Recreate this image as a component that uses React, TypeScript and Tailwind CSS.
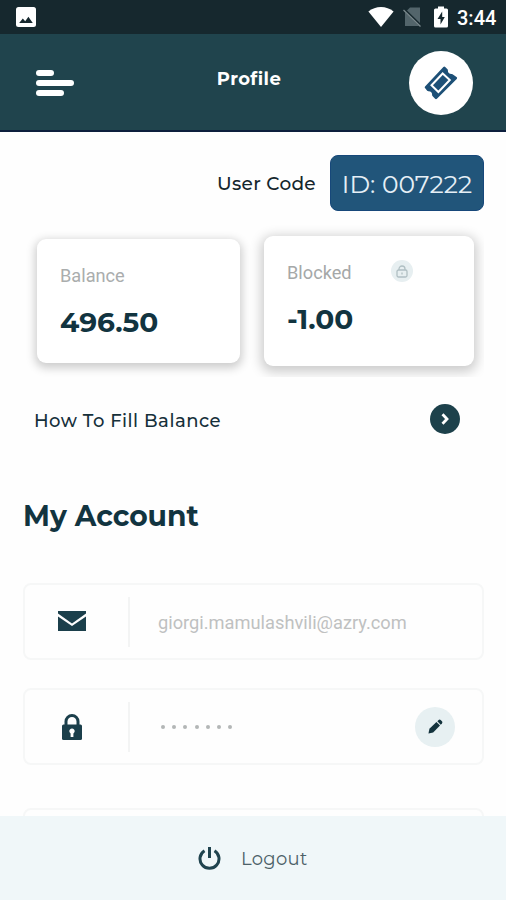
import type { ReactNode } from 'react'

function StatusBar() {
    return (
        <div className="flex h-[34px] shrink-0 items-center bg-[#16282e] pl-4 pr-[11px]">
            <svg width="20" height="20" viewBox="0 0 20 20">
                <rect width="20" height="20" rx="2.5" fill="#fff" />
                <path d="M3.2 16l3.6-4.6 2.4 2.8 3.2-4.4 4.4 6.2z" fill="#16282e" />
            </svg>
            <div className="ml-auto flex items-center">
                <svg width="26" height="20" viewBox="0 0 26 20">
                    <path d="M13 20L0.4 4.4C4 1.6 8.3 0 13 0s9 1.6 12.6 4.4z" fill="#fff" />
                </svg>
                <svg className="ml-[9px]" width="20" height="20" viewBox="0 0 20 20">
                    <path d="M7 0.5h10V19H2V5.5z" fill="#53656b" />
                    <path d="M0.8 2.2l17 16.6" stroke="#16282e" strokeWidth="2.6" />
                    <path d="M0.5 3l17 16.5" stroke="#7b898d" strokeWidth="1.3" />
                </svg>
                <svg className="ml-[10px]" width="16" height="22" viewBox="0 0 16 22">
                    <path d="M5 0.5h6v2h2.5A1.5 1.5 0 0 1 15 4v16a1.5 1.5 0 0 1-1.5 1.500h-11A1.5 1.5 0 0 1 1 20V4a1.500 1.500 0 0 1 1.500-1.500H5z" fill="#fff" />
                    <path d="M9.2 5.500L4.500 13h3v5.500L11.800 11H9.200z" fill="#16282e" />
                </svg>
                <span className="ml-2 mt-0.5 w-[38px] whitespace-nowrap font-[Roboto] text-[20px] font-medium leading-5 text-white">3:44</span>
            </div>
        </div>
    )
}

function Header() {
    return (
        <header className="flex h-[98px] shrink-0 items-center justify-between border-b-2 border-[#0d1f3d] bg-[#20444d] pl-9 pr-[33px]">
            <button className="flex w-[53px] flex-col gap-1 pt-0.5">
                <span className="h-1.5 w-[18px] rounded-full bg-white" />
                <span className="h-1.5 w-[38px] rounded-full bg-white" />
                <span className="h-1.5 w-7 rounded-full bg-white" />
            </button>
            <h1 className="mb-[5px] text-[18px] font-bold tracking-[0.4px] text-white">Profile</h1>
            <button className="mt-0.5 flex size-16 items-center justify-center rounded-full bg-white">
                <svg width="34" height="34" viewBox="0 0 34 34">
                    <path
                        d="M20.3 2L22.6 4.200c-0.300 3 1.700 5.300 5.200 5.200L31.800 12 12 31.800l-2.600-2.600c0.300-3.300-1.800-5.400-5.200-5.200L2 21.300z"
                        fill="#1d5077"
                        stroke="#1d5077"
                        strokeWidth="2.600"
                        strokeLinejoin="round"
                    />
                    <path d="M18.700 7.500L25.800 14 14.400 26 7.500 19.300z" fill="none" stroke="#fff" strokeWidth="2" />
                </svg>
            </button>
        </header>
    )
}

function Field({ icon, children }: { icon: ReactNode; children?: ReactNode }) {
    return (
        <div className="flex h-[77px] shrink-0 items-center rounded-lg border-2 border-[#f6f7f7]">
            <div className="flex w-[94px] justify-center">{icon}</div>
            <div className="ml-[9px] h-[50px] w-0.5 bg-[#f3f4f4]" />
            {children}
        </div>
    )
}

export default function App() {
    return (
        <div className="flex h-[900px] w-[506px] flex-col overflow-hidden bg-[#fefefe] font-[Montserrat,Inter,sans-serif] text-[#123440]">
            <StatusBar />
            <Header />

            <main className="flex min-h-0 flex-1 flex-col overflow-hidden pl-[23px] pr-[22px]">
                <div className="mt-[23px] flex h-14 shrink-0 items-center justify-end">
                    <span className="mr-3.5 mt-0.5 whitespace-nowrap text-[18.5px] font-medium tracking-[0.3px] text-[#14262c]">User Code</span>
                    <div className="flex h-14 w-[154px] items-center justify-center whitespace-nowrap rounded-lg border border-[#17487a] bg-[#21557a] pt-1 text-[25px] font-normal text-[#e6eff6]">
                        <span>ID: 007222</span>
                    </div>
                </div>

                <div className="flex h-[166px] shrink-0 items-start gap-6 overflow-hidden pl-3.5 pt-[25px]">
                    <section className="mt-[3px] h-[124px] w-[203px] rounded-[9px] bg-white pl-[23px] pt-[25px] shadow-[0_3px_10px_2px_rgba(0,0,0,0.2)]">
                        <p className="font-[Roboto] text-[18.2px] leading-6 text-[#aaadad]">Balance</p>
                        <p className="mt-4 text-[28px] font-bold leading-9">496.50</p>
                    </section>
                    <section className="h-[130px] w-[210px] rounded-[9px] bg-white pl-[23px] pt-[25px] shadow-[0_3px_12px_3px_rgba(0,0,0,0.2)]">
                        <div className="flex items-center">
                            <p className="w-[104px] font-[Roboto] text-[18.2px] leading-6 text-[#a5a8a8]">Blocked</p>
                            <span className="-mt-1 flex size-[22px] items-center justify-center rounded-full bg-[#e7eff1]">
                                <svg width="12" height="13" viewBox="0 0 12 13" fill="none" stroke="#b0bfc3" strokeWidth="1.3">
                                    <rect x="1" y="5" width="10" height="7" rx="1.5" />
                                    <path d="M3 5V4a3 3 0 0 1 6 0v1M6 7.5v2" />
                                </svg>
                            </span>
                        </div>
                        <p className="mt-4 text-[28px] font-bold leading-9">-1.00</p>
                    </section>
                </div>

                <div className="mt-[27px] flex h-[30px] shrink-0 items-center justify-between pl-[11px] pr-6">
                    <span className="mt-1 whitespace-nowrap text-[18px] font-medium tracking-[0.5px] text-[#16303a]">How To Fill Balance</span>
                    <span className="flex size-[30px] items-center justify-center rounded-full bg-[#1d414b]">
                        <svg width="8" height="12" viewBox="0 0 8 12" fill="none" stroke="#fff" strokeWidth="2.8">
                            <path d="M1.500 1.300L6 6l-4.500 4.700" />
                        </svg>
                    </span>
                </div>

                <h2 className="mt-16 text-[28.2px] font-bold leading-9">My Account</h2>

                <div className="mt-[49px] flex flex-col gap-7">
                    <Field
                        icon={
                            <svg className="mb-px" width="28" height="20" viewBox="0 0 28 20" fill="#1b3f4b">
                                <path d="M0 0h28v2.500L14 12.500 0 2.500z" />
                                <path d="M0 5.500l14 9.500 14-9.500V20H0z" />
                            </svg>
                        }
                    >
                        <span className="ml-7 mt-0.5 font-[Roboto] text-[18.25px] text-[#bfc1c1]">giorgi.mamulashvili@azry.com</span>
                    </Field>
                    <Field
                        icon={
                            <svg width="20" height="26" viewBox="0 0 20 26">
                                <path d="M4 12V7.500a6 6 0 0 1 12 0V12" fill="none" stroke="#1b3f4b" strokeWidth="3" />
                                <rect y="10.500" width="20" height="15.500" rx="1.500" fill="#1b3f4b" />
                                <path d="M8.600 19.500a2.700 2.700 0 1 1 2.800 0V23H8.600z" fill="#fff" />
                            </svg>
                        }
                    >
                        <div className="ml-[31px] flex gap-[7.2px]">
                            {[0, 1, 2, 3, 4, 5, 6].map((i) => (
                                <span key={i} className="size-1 rounded-full bg-[#b3b6b6]" />
                            ))}
                        </div>
                        <button className="ml-auto mr-[27px] flex size-10 items-center justify-center rounded-full bg-[#e7f0f2]">
                            <svg width="15" height="15" viewBox="0 0 16 16" fill="#14333d">
                                <path d="M0.500 15.500l1-5 7.500-7.300 3.800 3.800-7.300 7.500z" />
                                <path d="M10 2.400l1.300-1.300a1.600 1.600 0 0 1 2.200 0l1.400 1.400a1.600 1.600 0 0 1 0 2.200l-1.300 1.300z" />
                            </svg>
                        </button>
                    </Field>
                </div>
                <div className="mt-[43px] h-20 shrink-0 rounded-lg border-2 border-[#f6f7f7]" />
            </main>

            <footer className="flex h-[84px] shrink-0 items-center bg-[#f0f7f9] pl-[198px]">
                <svg width="23" height="24" viewBox="0 0 23 24" fill="none" stroke="#20444f" strokeWidth="3">
                    <path d="M6.500 4.700a9.500 9.500 0 1 0 10 0M11.500 1v11" />
                </svg>
                <span className="ml-5 mt-[3px] text-[18px] font-normal tracking-[0.3px] text-[#4c6168]">Logout</span>
            </footer>
        </div>
    )
}
